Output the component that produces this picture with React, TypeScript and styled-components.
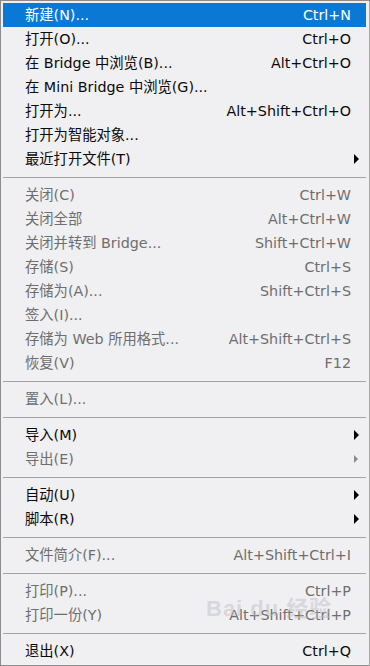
import React from 'react'
import styled, { createGlobalStyle } from 'styled-components'

const Global = createGlobalStyle`
  html, body {
    margin: 0;
    padding: 0;
    background: #f0eff2;
  }
  body {
    font-family: "DejaVu Sans", "Noto Sans CJK SC", sans-serif;
  }
`

const Menu = styled.div`
  position: relative;
  box-sizing: border-box;
  width: 370px;
  height: 666px;
  padding: 2px 3px 3px 2px;
  background: #f0eff2;
  border: 1px solid #8c8c8c;
  border-right-color: #a8a8a8;
  overflow: hidden;
`

const Row = styled.div<{ $active?: boolean; $disabled?: boolean }>`
  display: flex;
  align-items: center;
  height: 24px;
  padding: 0 15px 0 22px;
  font-size: 14.3px;
  line-height: 24px;
  color: ${(p) => (p.$active ? '#fff' : p.$disabled ? '#6e6e6e' : '#0a0a0a')};
  background: ${(p) => (p.$active ? '#0a78d5' : 'transparent')};
  white-space: nowrap;
`

const Label = styled.span`
  flex: 1;
`

const Shortcut = styled.span`
  text-align: right;
`

const Arrow = styled.span<{ $disabled?: boolean }>`
  width: 0;
  height: 0;
  margin-right: ${(p) => (p.$disabled ? -7 : -8)}px;
  border-top: ${(p) => (p.$disabled ? 4 : 5)}px solid transparent;
  border-bottom: ${(p) => (p.$disabled ? 4 : 5)}px solid transparent;
  border-left: ${(p) => (p.$disabled ? 4 : 5)}px solid ${(p) => (p.$disabled ? '#8a8a8a' : '#000')};
`

const Separator = styled.div`
  height: 12px;
  display: flex;
  align-items: center;

  &::after {
    content: '';
    flex: 1;
    height: 1px;
    background: #a3a3a3;
  }
`

const Watermark = styled.div`
  position: absolute;
  left: 205px;
  top: 597px;
  color: rgba(185, 185, 195, 0.45);
  font-family: "Liberation Sans", "Noto Sans CJK SC", sans-serif;
  font-size: 22px;
  font-weight: bold;
  letter-spacing: 1px;
  pointer-events: none;
  line-height: 1;
`

type Item =
  | { sep: true }
  | { label: string; key?: string; sub?: boolean; off?: boolean; active?: boolean }

const items: Item[] = [
  { label: '新建(N)...', key: 'Ctrl+N', active: true },
  { label: '打开(O)...', key: 'Ctrl+O' },
  { label: '在 Bridge 中浏览(B)...', key: 'Alt+Ctrl+O' },
  { label: '在 Mini Bridge 中浏览(G)...' },
  { label: '打开为...', key: 'Alt+Shift+Ctrl+O' },
  { label: '打开为智能对象...' },
  { label: '最近打开文件(T)', sub: true },
  { sep: true },
  { label: '关闭(C)', key: 'Ctrl+W', off: true },
  { label: '关闭全部', key: 'Alt+Ctrl+W', off: true },
  { label: '关闭并转到 Bridge...', key: 'Shift+Ctrl+W', off: true },
  { label: '存储(S)', key: 'Ctrl+S', off: true },
  { label: '存储为(A)...', key: 'Shift+Ctrl+S', off: true },
  { label: '签入(I)...', off: true },
  { label: '存储为 Web 所用格式...', key: 'Alt+Shift+Ctrl+S', off: true },
  { label: '恢复(V)', key: 'F12', off: true },
  { sep: true },
  { label: '置入(L)...', off: true },
  { sep: true },
  { label: '导入(M)', sub: true },
  { label: '导出(E)', sub: true, off: true },
  { sep: true },
  { label: '自动(U)', sub: true },
  { label: '脚本(R)', sub: true },
  { sep: true },
  { label: '文件简介(F)...', key: 'Alt+Shift+Ctrl+I', off: true },
  { sep: true },
  { label: '打印(P)...', key: 'Ctrl+P', off: true },
  { label: '打印一份(Y)', key: 'Alt+Shift+Ctrl+P', off: true },
  { sep: true },
  { label: '退出(X)', key: 'Ctrl+Q' },
]

export default function App() {
  return (
    <>
      <Global />
      <Menu>
        {items.map((it, i) =>
          'sep' in it ? (
            <Separator key={i} />
          ) : (
            <Row key={i} $active={it.active} $disabled={it.off}>
              <Label>{it.label}</Label>
              {it.key && <Shortcut>{it.key}</Shortcut>}
              {it.sub && <Arrow $disabled={it.off} />}
            </Row>
          )
        )}
        <Watermark>Bai du 经验</Watermark>
      </Menu>
    </>
  )
}
